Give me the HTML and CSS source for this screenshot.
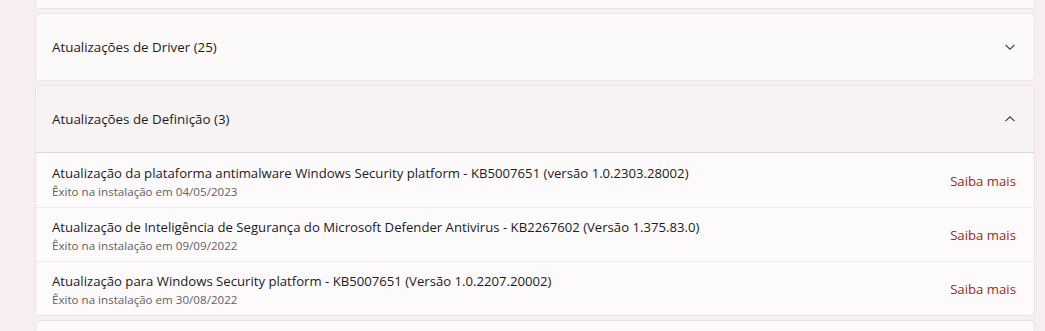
FILE: index.html
```html
<!DOCTYPE html>
<html lang="pt-BR">
<head>
<meta charset="utf-8">
<link rel="stylesheet" href="styles.css">
</head>
<body>
<div class="page">
  <div class="card card-cut"></div>

  <div class="card">
    <div class="header">
      <span class="header-title">Atualizações de Driver (25)</span>
      <svg class="chev" width="12" height="8" viewBox="0 0 12 8"><path d="M1.5 1.8 L6 6.2 L10.5 1.8" fill="none" stroke="#3a3a3a" stroke-width="1.1"/></svg>
    </div>
  </div>

  <div class="card">
    <div class="header header-open">
      <span class="header-title">Atualizações de Definição (3)</span>
      <svg class="chev" width="12" height="8" viewBox="0 0 12 8"><path d="M1.5 6.2 L6 1.8 L10.5 6.2" fill="none" stroke="#3a3a3a" stroke-width="1.1"/></svg>
    </div>
    <div class="items">
      <div class="item">
        <div class="item-text">
          <div class="item-title">Atualização da plataforma antimalware Windows Security platform - KB5007651 (versão 1.0.2303.28002)</div>
          <div class="item-sub">Êxito na instalação em 04/05/2023</div>
        </div>
        <a class="more">Saiba mais</a>
      </div>
      <div class="item">
        <div class="item-text">
          <div class="item-title">Atualização de Inteligência de Segurança do Microsoft Defender Antivirus - KB2267602 (Versão 1.375.83.0)</div>
          <div class="item-sub">Êxito na instalação em 09/09/2022</div>
        </div>
        <a class="more">Saiba mais</a>
      </div>
      <div class="item">
        <div class="item-text">
          <div class="item-title">Atualização para Windows Security platform - KB5007651 (Versão 1.0.2207.20002)</div>
          <div class="item-sub">Êxito na instalação em 30/08/2022</div>
        </div>
        <a class="more">Saiba mais</a>
      </div>
    </div>
  </div>

  <div class="card card-next"></div>
</div>
</body>
</html>
```

FILE: styles.css
```css
html, body {
  margin: 0;
  padding: 0;
  background: #f6eef0;
  height: 100%;
  overflow: hidden;
}
body {
  font-family: "Segoe UI", "Open Sans", "Noto Sans", sans-serif;
  color: #1b1b1b;
}
.page {
  display: flex;
  flex-direction: column;
  gap: 4px;
  padding: 0 10px 0 35px;
}
.card {
  background: #fcf9f9;
  border: 1px solid #ebe4e5;
  border-radius: 5px;
  overflow: hidden;
}
.card-cut {
  height: 8px;
  border-top: none;
  border-radius: 0 0 5px 5px;
}
.card-next {
  height: 20px;
}
.header {
  height: 66px;
  display: flex;
  align-items: center;
  justify-content: space-between;
  padding: 0 18px 0 16px;
}
.header-open {
  background: #f7f3f3;
  border-bottom: 1px solid #dcd6d6;
}
.header-title {
  font-size: 13.35px;
}
.chev {
  display: block;
}
.items {
  background: #fdfafb;
}
.item {
  height: 53px;
  display: flex;
  align-items: center;
  justify-content: space-between;
  padding: 0 18px 0 16px;
  border-top: 1px solid #f1ecec;
}
.item:first-child {
  border-top: none;
  height: 54px;
}
.item-text {
  display: flex;
  flex-direction: column;
  margin-top: 3px;
}
.item-title {
  font-size: 13.15px;
  line-height: 19px;
}
.item-sub {
  font-size: 11.6px;
  line-height: 17px;
  color: #616161;
}
.more {
  font-size: 13.2px;
  color: #9c2a14;
  margin-top: 1px;
}
```
